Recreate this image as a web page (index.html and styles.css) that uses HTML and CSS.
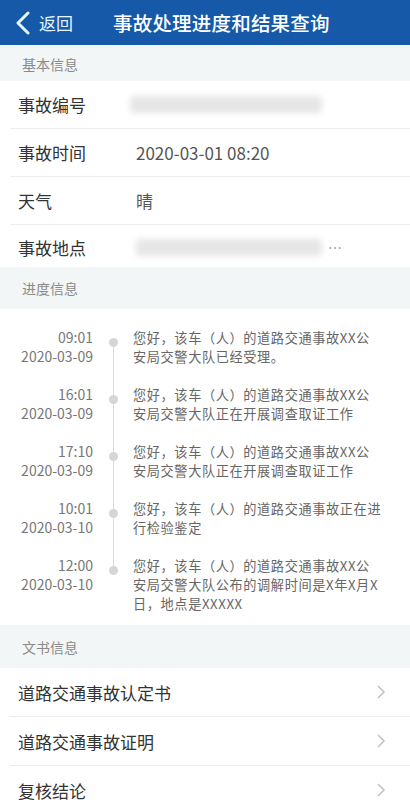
FILE: index.html
```html
<!DOCTYPE html>
<html lang="zh-CN">
<head>
    <meta charset="UTF-8">
    <meta name="viewport" content="width=device-width, initial-scale=1.0">
    <title>事故处理进度和结果查询</title>
    <link rel="stylesheet" href="styles.css">
</head>
<body>
    <div class="nav-bar">
        <div class="back">
            <svg class="back-icon" width="16" height="24" viewBox="0 0 16 24">
                <path d="M13 2 L3 12 L13 22" fill="none" stroke="#e4f6ff" stroke-width="3" stroke-linecap="round" stroke-linejoin="round"/>
            </svg>
            <span>返回</span>
        </div>
        <div class="nav-title">事故处理进度和结果查询</div>
    </div>

    <div class="section-title first">基本信息</div>
    <div class="info-list">
        <div class="info-row">
            <span class="label">事故编号</span>
            <span class="blur blur-no"></span>
        </div>
        <div class="info-row">
            <span class="label">事故时间</span>
            <span class="value">2020-03-01 08:20</span>
        </div>
        <div class="info-row">
            <span class="label">天气</span>
            <span class="value">晴</span>
        </div>
        <div class="info-row last">
            <span class="label">事故地点</span>
            <span class="blur blur-addr"></span>
            <span class="ellipsis">…</span>
        </div>
    </div>

    <div class="section-title">进度信息</div>
    <div class="timeline">
        <div class="tl-item">
            <div class="tl-time">09:01<br>2020-03-09</div>
            <div class="tl-dot"></div>
            <div class="tl-text">您好，该车（人）的道路交通事故XX公<br>安局交警大队已经受理。</div>
        </div>
        <div class="tl-item">
            <div class="tl-time">16:01<br>2020-03-09</div>
            <div class="tl-dot"></div>
            <div class="tl-text">您好，该车（人）的道路交通事故XX公<br>安局交警大队正在开展调查取证工作</div>
        </div>
        <div class="tl-item">
            <div class="tl-time">17:10<br>2020-03-09</div>
            <div class="tl-dot"></div>
            <div class="tl-text">您好，该车（人）的道路交通事故XX公<br>安局交警大队正在开展调查取证工作</div>
        </div>
        <div class="tl-item">
            <div class="tl-time">10:01<br>2020-03-10</div>
            <div class="tl-dot"></div>
            <div class="tl-text">您好，该车（人）的道路交通事故正在进<br>行检验鉴定</div>
        </div>
        <div class="tl-item">
            <div class="tl-time">12:00<br>2020-03-10</div>
            <div class="tl-dot"></div>
            <div class="tl-text">您好，该车（人）的道路交通事故XX公<br>安局交警大队公布的调解时间是X年X月X<br>日，地点是XXXXX</div>
        </div>
    </div>

    <div class="section-title docs">文书信息</div>
    <div class="doc-list">
        <div class="doc-row">
            <span>道路交通事故认定书</span>
            <svg class="arrow" width="10" height="16" viewBox="0 0 10 16"><path d="M2 2 L8 8 L2 14" fill="none" stroke="#c2c2c2" stroke-width="1.6"/></svg>
        </div>
        <div class="doc-row">
            <span>道路交通事故证明</span>
            <svg class="arrow" width="10" height="16" viewBox="0 0 10 16"><path d="M2 2 L8 8 L2 14" fill="none" stroke="#c2c2c2" stroke-width="1.6"/></svg>
        </div>
        <div class="doc-row">
            <span>复核结论</span>
            <svg class="arrow" width="10" height="16" viewBox="0 0 10 16"><path d="M2 2 L8 8 L2 14" fill="none" stroke="#c2c2c2" stroke-width="1.6"/></svg>
        </div>
    </div>
</body>
</html>
```

FILE: styles.css
```css
:root {
    --nav-bg: #1559a8;
    --band-bg: #f3f6f7;
    --line: #ececec;
    --label: #333;
    --value: #555;
    --muted: #8a8a8a;
}

body {
    margin: 0;
    font-family: "Noto Sans CJK SC", "Noto Sans", sans-serif;
    background: #fff;
    color: var(--label);
    overflow: hidden;
}

.nav-bar {
    height: 45px;
    background: var(--nav-bg);
    display: flex;
    align-items: center;
    color: #fff;
}

.back {
    display: flex;
    align-items: center;
    padding-left: 15px;
    width: 98px;
    font-size: 17px;
    color: #e4f6ff;
}

.back-icon {
    margin-right: 8px;
}

.nav-title {
    font-size: 19.5px;
    font-weight: 500;
    letter-spacing: 0.2px;
}

.section-title {
    height: 42px;
    display: flex;
    align-items: center;
    padding-left: 22px;
    font-size: 14px;
    color: var(--muted);
    background: var(--band-bg);
}

.section-title.first {
    height: 34px;
    padding-top: 2px;
}

.section-title.docs {
    height: 43px;
}

.info-row {
    height: 48px;
    display: flex;
    align-items: center;
    margin-left: 10px;
    padding-left: 8px;
    border-bottom: 1px solid var(--line);
    box-sizing: border-box;
}

.info-row.last {
    height: 42px;
    border-bottom: none;
    padding-top: 2px;
}

.label {
    width: 118px;
    font-size: 17px;
    color: var(--label);
}

.value {
    font-size: 17px;
    color: var(--value);
}

.blur {
    display: inline-block;
    height: 17px;
    background: #e6e6e6;
    filter: blur(3px);
    border-radius: 4px;
}

.blur-no {
    width: 192px;
    margin-left: -6px;
}

.blur-addr {
    width: 186px;
}

.ellipsis {
    margin-left: 6px;
    font-size: 14px;
    color: #888;
    letter-spacing: 1px;
}

.timeline {
    padding: 19px 0 12px;
}

.tl-item {
    display: flex;
    position: relative;
    padding-bottom: 19px;
}

.tl-item:last-child {
    padding-bottom: 0;
}

.tl-item::before {
    content: "";
    position: absolute;
    left: 113px;
    top: 0;
    bottom: 0;
    width: 1px;
    background: #dcdcdc;
}

.tl-item:first-child::before {
    top: 12px;
}

.tl-item:last-child::before {
    bottom: auto;
    height: 16px;
}

.tl-time {
    width: 93px;
    text-align: right;
    font-size: 14px;
    line-height: 19px;
    color: #777;
}

.tl-dot {
    position: absolute;
    left: 109px;
    top: 10px;
    width: 9px;
    height: 9px;
    border-radius: 50%;
    background: #d6d6d6;
}

.tl-text {
    margin-left: 40px;
    font-size: 13.2px;
    letter-spacing: 0.6px;
    line-height: 19px;
    color: #666;
    white-space: nowrap;
}

.doc-row {
    height: 49px;
    display: flex;
    align-items: center;
    justify-content: space-between;
    margin-left: 10px;
    padding: 0 24px 0 8px;
    border-bottom: 1px solid var(--line);
    box-sizing: border-box;
    font-size: 17px;
    color: var(--label);
}

.arrow {
    flex-shrink: 0;
}
```
